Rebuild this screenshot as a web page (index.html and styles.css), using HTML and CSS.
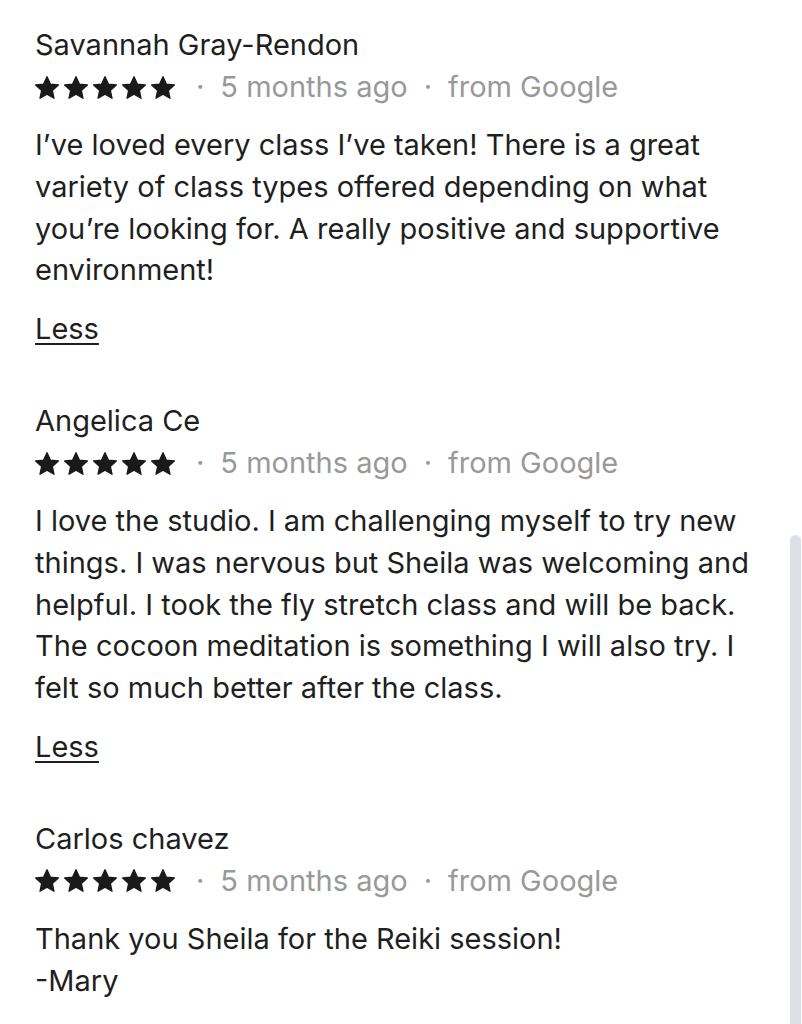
FILE: index.html
```html
<!DOCTYPE html>
<html lang="en">
<head>
<meta charset="utf-8">
<link rel="stylesheet" href="styles.css">
</head>
<body>
<div class="list">
  <div class="review">
    <div class="name">Savannah Gray-Rendon</div>
    <div class="meta">
      <span class="stars">
        <svg viewBox="1.2 1.2 21.6 20.6"><path d="M12 1.8l3 6.6 7.2.8-5.4 4.9 1.5 7.1L12 17.6l-6.3 3.6 1.5-7.1-5.4-4.9 7.2-.8z"/></svg>
        <svg viewBox="1.2 1.2 21.6 20.6"><path d="M12 1.8l3 6.6 7.2.8-5.4 4.9 1.5 7.1L12 17.6l-6.3 3.6 1.5-7.1-5.4-4.9 7.2-.8z"/></svg>
        <svg viewBox="1.2 1.2 21.6 20.6"><path d="M12 1.8l3 6.6 7.2.8-5.4 4.9 1.5 7.1L12 17.6l-6.3 3.6 1.5-7.1-5.4-4.9 7.2-.8z"/></svg>
        <svg viewBox="1.2 1.2 21.6 20.6"><path d="M12 1.8l3 6.6 7.2.8-5.4 4.9 1.5 7.1L12 17.6l-6.3 3.6 1.5-7.1-5.4-4.9 7.2-.8z"/></svg>
        <svg viewBox="1.2 1.2 21.6 20.6"><path d="M12 1.8l3 6.6 7.2.8-5.4 4.9 1.5 7.1L12 17.6l-6.3 3.6 1.5-7.1-5.4-4.9 7.2-.8z"/></svg>
      </span>
      <span class="dot">·</span><span>5 months ago</span><span class="dot">·</span><span>from Google</span>
    </div>
    <p class="body">I’ve loved every class I’ve taken! There is a great variety of class types offered depending on what you’re looking for. A really positive and supportive environment!</p>
    <a class="less">Less</a>
  </div>
  <div class="review">
    <div class="name">Angelica Ce</div>
    <div class="meta">
      <span class="stars">
        <svg viewBox="1.2 1.2 21.6 20.6"><path d="M12 1.8l3 6.6 7.2.8-5.4 4.9 1.5 7.1L12 17.6l-6.3 3.6 1.5-7.1-5.4-4.9 7.2-.8z"/></svg>
        <svg viewBox="1.2 1.2 21.6 20.6"><path d="M12 1.8l3 6.6 7.2.8-5.4 4.9 1.5 7.1L12 17.6l-6.3 3.6 1.5-7.1-5.4-4.9 7.2-.8z"/></svg>
        <svg viewBox="1.2 1.2 21.6 20.6"><path d="M12 1.8l3 6.6 7.2.8-5.4 4.9 1.5 7.1L12 17.6l-6.3 3.6 1.5-7.1-5.4-4.9 7.2-.8z"/></svg>
        <svg viewBox="1.2 1.2 21.6 20.6"><path d="M12 1.8l3 6.6 7.2.8-5.4 4.9 1.5 7.1L12 17.6l-6.3 3.6 1.5-7.1-5.4-4.9 7.2-.8z"/></svg>
        <svg viewBox="1.2 1.2 21.6 20.6"><path d="M12 1.8l3 6.6 7.2.8-5.4 4.9 1.5 7.1L12 17.6l-6.3 3.6 1.5-7.1-5.4-4.9 7.2-.8z"/></svg>
      </span>
      <span class="dot">·</span><span>5 months ago</span><span class="dot">·</span><span>from Google</span>
    </div>
    <p class="body">I love the studio. I am challenging myself to try new things. I was nervous but Sheila was welcoming and helpful. I took the fly stretch class and will be back. The cocoon meditation is something I will also try. I felt so much better after the class.</p>
    <a class="less">Less</a>
  </div>
  <div class="review">
    <div class="name">Carlos chavez</div>
    <div class="meta">
      <span class="stars">
        <svg viewBox="1.2 1.2 21.6 20.6"><path d="M12 1.8l3 6.6 7.2.8-5.4 4.9 1.5 7.1L12 17.6l-6.3 3.6 1.5-7.1-5.4-4.9 7.2-.8z"/></svg>
        <svg viewBox="1.2 1.2 21.6 20.6"><path d="M12 1.8l3 6.6 7.2.8-5.4 4.9 1.5 7.1L12 17.6l-6.3 3.6 1.5-7.1-5.4-4.9 7.2-.8z"/></svg>
        <svg viewBox="1.2 1.2 21.6 20.6"><path d="M12 1.8l3 6.6 7.2.8-5.4 4.9 1.5 7.1L12 17.6l-6.3 3.6 1.5-7.1-5.4-4.9 7.2-.8z"/></svg>
        <svg viewBox="1.2 1.2 21.6 20.6"><path d="M12 1.8l3 6.6 7.2.8-5.4 4.9 1.5 7.1L12 17.6l-6.3 3.6 1.5-7.1-5.4-4.9 7.2-.8z"/></svg>
        <svg viewBox="1.2 1.2 21.6 20.6"><path d="M12 1.8l3 6.6 7.2.8-5.4 4.9 1.5 7.1L12 17.6l-6.3 3.6 1.5-7.1-5.4-4.9 7.2-.8z"/></svg>
      </span>
      <span class="dot">·</span><span>5 months ago</span><span class="dot">·</span><span>from Google</span>
    </div>
    <p class="body">Thank you Sheila for the Reiki session!<br>-Mary</p>
  </div>
</div>
<div class="scrollbar"></div>
</body>
</html>
```

FILE: styles.css
```css
html, body {
  margin: 0;
  padding: 0;
  background: #fff;
  overflow: hidden;
}
body {
  font-family: Inter, "Noto Sans", sans-serif;
  color: #1f1f1f;
  height: 1024px;
  position: relative;
}
.list {
  padding: 24px 40px 0 35px;
  display: flex;
  flex-direction: column;
  gap: 50px;
}
.review {
  display: flex;
  flex-direction: column;
  align-items: flex-start;
}
.name {
  font-size: 29px;
  line-height: 42px;
  font-weight: 400;
}
.meta {
  display: flex;
  align-items: center;
  font-size: 29px;
  line-height: 42px;
  color: #999;
}
.stars {
  display: flex;
  gap: 5px;
  margin-right: 5px;
}
.stars svg {
  width: 24px;
  height: 23px;
  fill: #1a1a1a;
  stroke: #1a1a1a;
  stroke-width: 1.2;
  stroke-linejoin: round;
}
.dot {
  margin-right: 16px;
}
.meta span + .dot {
  margin-left: 16px;
}
.body {
  margin: 16px 0 0;
  font-size: 29px;
  line-height: 41.75px;
}
.less {
  margin-top: 17px;
  font-size: 29px;
  line-height: 42px;
  text-decoration: underline;
  text-underline-offset: 4px;
}
.scrollbar {
  position: absolute;
  right: 1px;
  top: 535px;
  width: 11px;
  height: 520px;
  background: #dde0e4;
  border-radius: 6px;
}
```
